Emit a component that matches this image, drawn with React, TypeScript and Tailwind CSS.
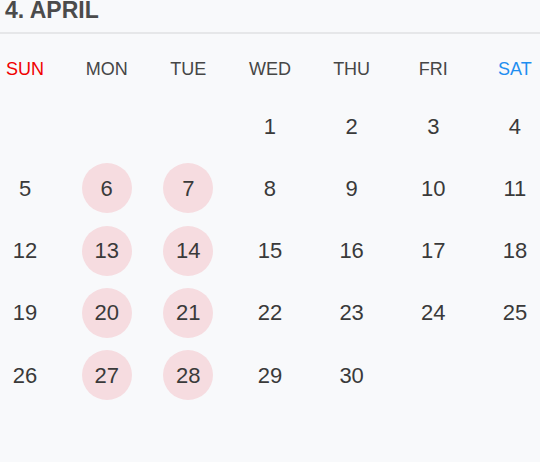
const weekdays = ['SUN', 'MON', 'TUE', 'WED', 'THU', 'FRI', 'SAT']

// April: the 1st falls on a Wednesday
const weeks: (number | null)[][] = [
  [null, null, null, 1, 2, 3, 4],
  [5, 6, 7, 8, 9, 10, 11],
  [12, 13, 14, 15, 16, 17, 18],
  [19, 20, 21, 22, 23, 24, 25],
  [26, 27, 28, 29, 30, null, null],
]

export default function App() {
  return (
    <div
      className="w-[540px] h-[462px] bg-[#f8f9fb] overflow-hidden"
      style={{ fontFamily: '"Liberation Sans", Arial, sans-serif' }}
    >
      {/* Month title */}
      <div className="h-[34px] border-b-2 border-[#e6e7e9] pl-[5px]">
        <h1 className="text-[23px] leading-[20px] font-bold text-[#4b4b4b]">4. APRIL</h1>
      </div>

      {/* Weekday header */}
      <div className="flex justify-between pt-[23px]">
        {weekdays.map((d, i) => (
          <div
            key={d}
            className={
              'w-[50px] text-center text-[18px] leading-[24px] ' +
              (i === 0 ? 'text-[#f00000]' : i === 6 ? 'text-[#1e8ef0]' : 'text-[#464646]')
            }
          >
            {d}
          </div>
        ))}
      </div>

      {/* Days */}
      <div className="flex flex-col gap-[12.25px] mt-[20px]">
        {weeks.map((week, wi) => (
          <div key={wi} className="flex justify-between">
            {week.map((day, di) => (
              <div
                key={di}
                className={
                  'w-[50px] h-[50px] rounded-full flex items-center justify-center text-[22px] text-[#3a3a3a] ' +
                  (day && (di === 1 || di === 2) ? 'bg-[#f6dce0]' : '')
                }
              >
                {day ?? ''}
              </div>
            ))}
          </div>
        ))}
      </div>
    </div>
  )
}
